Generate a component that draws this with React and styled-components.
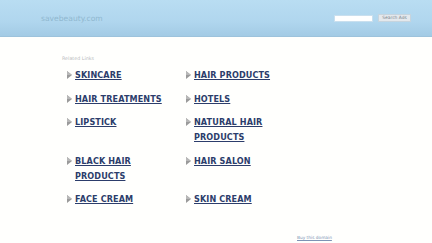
import React from 'react';
import styled, { createGlobalStyle } from 'styled-components';

const GlobalStyle = createGlobalStyle`
  html, body {
    margin: 0;
    padding: 0;
    background: #fffffd;
  }
  body {
    font-family: "DejaVu Sans", Verdana, sans-serif;
    width: 432px;
    height: 243px;
    overflow: hidden;
  }
`;

const Header = styled.div`
  height: 37px;
  background: linear-gradient(to bottom, #b9ddf2 0%, #b0d6ee 60%, #a3cbe5 100%);
  border-bottom: 1px solid #9dc3dc;
  display: flex;
  align-items: center;
  justify-content: space-between;
  padding: 0 21px 0 41px;
  box-sizing: border-box;
`;

const Domain = styled.div`
  font-size: 7.6px;
  color: #90b7cf;
  margin-top: 1px;
`;

const SearchForm = styled.form`
  display: flex;
  align-items: center;
  gap: 5px;
  margin: 0;
`;

const SearchInput = styled.div`
  width: 37px;
  height: 5px;
  background: #ffffff;
  border: 1px solid #c9dfee;
`;

const SearchButton = styled.div`
  width: 31px;
  height: 6px;
  background: #e4e8ec;
  border: 1px solid #c6d4de;
  font-size: 4.4px;
  line-height: 6px;
  color: #7a8790;
  text-align: center;
`;

const Main = styled.div`
  padding: 19px 0 0 62px;
  position: relative;
  height: 205px;
  box-sizing: border-box;
`;

const RelatedTitle = styled.div`
  font-size: 4.8px;
  color: #b9bcc0;
  margin-bottom: 7px;
`;

const LinkGrid = styled.div`
  display: grid;
  grid-template-columns: 119px 119px;
  row-gap: 8.6px;
  padding-left: 5px;
`;

const LinkItem = styled.div`
  display: flex;
  align-items: flex-start;
  gap: 3px;
`;

const Arrow = styled.svg`
  flex: none;
  width: 5px;
  height: 8px;
  margin-top: 3px;
`;

const LinkText = styled.a`
  font-size: 8.1px;
  font-weight: bold;
  line-height: 15px;
  color: #2c3d6b;
  text-decoration: underline;
  text-underline-offset: 1px;
  max-width: 100px;
  letter-spacing: 0.1px;
`;

const BuyLink = styled.a`
  position: absolute;
  left: 297px;
  top: 198px;
  font-size: 4.3px;
  color: #7d93b5;
  text-decoration: underline;
`;

const links = [
  'SKINCARE',
  'HAIR PRODUCTS',
  'HAIR TREATMENTS',
  'HOTELS',
  'LIPSTICK',
  'NATURAL HAIR PRODUCTS',
  'BLACK HAIR PRODUCTS',
  'HAIR SALON',
  'FACE CREAM',
  'SKIN CREAM',
];

const App = () => {
  return (
    <>
      <GlobalStyle />
      <Header>
        <Domain>savebeauty.com</Domain>
        <SearchForm>
          <SearchInput />
          <SearchButton>Search Ads</SearchButton>
        </SearchForm>
      </Header>
      <Main>
        <RelatedTitle>Related Links</RelatedTitle>
        <LinkGrid>
          {links.map((label) => (
            <LinkItem key={label}>
              <Arrow viewBox="0 0 5 8">
                <polygon points="0,0 5,4 0,8" fill="#9a9a9a" />
                <polygon points="0,0 5,4 0,4" fill="#b8b8b8" />
              </Arrow>
              <LinkText href="#">{label}</LinkText>
            </LinkItem>
          ))}
        </LinkGrid>
        <BuyLink href="#">Buy this domain</BuyLink>
      </Main>
    </>
  );
};

export default App;
